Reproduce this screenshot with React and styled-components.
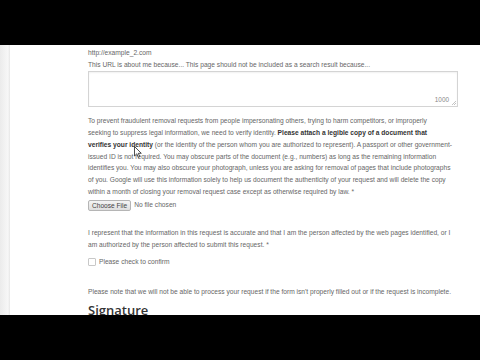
import React from 'react'
import styled, { createGlobalStyle } from 'styled-components'

const Global = createGlobalStyle`
  html, body { margin: 0; padding: 0; background: #000; }
  body { font-family: "Liberation Sans", Arial, sans-serif; }
`

const Frame = styled.div`
  width: 480px;
  height: 360px;
  display: flex;
  flex-direction: column;
  background: #000;
  overflow: hidden;
  position: relative;
`

const Letterbox = styled.div`
  height: ${({ h }) => h}px;
  background: #000;
  flex: none;
`

const Screen = styled.div`
  height: 270px;
  display: flex;
  background: #fff;
  overflow: hidden;
  flex: none;
`

const Strip = styled.div`
  width: 10px;
  flex: none;
  background: linear-gradient(to right, #ebebeb, #f7f7f7 80%, #e6e6e6);
`

const Content = styled.div`
  width: 370px;
  padding: 2px 0 0 78px;
  color: #666;
  font-size: 6.65px;
  line-height: 11.7px;
`

const Line = styled.div`
  white-space: nowrap;
`

const AreaBox = styled.div`
  height: 33px;
  border: 1px solid #d4d4d4;
  box-shadow: inset 0 1px 2px rgba(0,0,0,0.06);
  display: flex;
  align-items: flex-end;
  justify-content: flex-end;
  padding: 0 8px 1px 0;
  position: relative;
  margin-top: 1px;
`

const Counter = styled.span`
  color: #888;
  font-size: 6.4px;
`

const Grip = styled.svg`
  position: absolute;
  right: 1px;
  bottom: 1px;
`

const Para = styled.div`
  margin: ${({ m }) => m};
  color: #666;
`

const Strong = styled.b`
  color: #333;
  font-weight: bold;
`

const FileRow = styled.div`
  display: flex;
  align-items: center;
  gap: 3px;
  margin-top: 2px;
`

const FileButton = styled.span`
  display: inline-block;
  height: 9px;
  line-height: 9px;
  padding: 0 3px;
  border: 1px solid #b5b5b5;
  border-radius: 2px;
  background: linear-gradient(#f4f4f4, #dedede);
  color: #444;
  font-size: 6.6px;
`

const CheckRow = styled.label`
  display: flex;
  align-items: center;
  gap: 3px;
  margin-top: 6px;
`

const Box = styled.span`
  width: 6px;
  height: 6px;
  border: 1px solid #c8c8c8;
  border-radius: 1px;
  background: #fff;
`

const Heading = styled.h2`
  margin: 4px 0 0;
  font-family: "Open Sans", "Liberation Sans", sans-serif;
  font-size: 13px;
  font-weight: 600;
  color: #333;
  line-height: 16px;
`

const Cursor = styled.svg`
  position: absolute;
  left: 134px;
  top: 146px;
`

export default function App() {
  return (
    <Frame>
      <Global />
      <Letterbox h={45} />
      <Screen>
        <Strip />
        <Content>
          <Line>http://example_2.com</Line>
          <Line>This URL is about me because... This page should not be included as a search result because...</Line>
          <AreaBox>
            <Counter>1000</Counter>
            <Grip width="5" height="5" viewBox="0 0 5 5">
              <path d="M5 1 L1 5 M5 3 L3 5" stroke="#aaa" strokeWidth="0.7" />
            </Grip>
          </AreaBox>
          <Para m="8px 0 0">
            <Line>To prevent fraudulent removal requests from people impersonating others, trying to harm competitors, or improperly</Line>
            <Line>seeking to suppress legal information, we need to verify identity. <Strong>Please attach a legible copy of a document that</Strong></Line>
            <Line><Strong>verifies your identity</Strong> (or the identity of the person whom you are authorized to represent). A passport or other government-</Line>
            <Line>issued ID is not required. You may obscure parts of the document (e.g., numbers) as long as the remaining information</Line>
            <Line>identifies you. You may also obscure your photograph, unless you are asking for removal of pages that include photographs</Line>
            <Line>of you. Google will use this information solely to help us document the authenticity of your request and will delete the copy</Line>
            <Line>within a month of closing your removal request case except as otherwise required by law. *</Line>
          </Para>
          <FileRow>
            <FileButton>Choose File</FileButton>
            <span>No file chosen</span>
          </FileRow>
          <Para m="16px 0 0">
            <Line>I represent that the information in this request is accurate and that I am the person affected by the web pages identified, or I</Line>
            <Line>am authorized by the person affected to submit this request. *</Line>
          </Para>
          <CheckRow>
            <Box />
            <span>Please check to confirm</span>
          </CheckRow>
          <Para m="18px 0 0">
            <Line>Please note that we will not be able to process your request if the form isn't properly filled out or if the request is incomplete.</Line>
          </Para>
          <Heading>Signature</Heading>
        </Content>
      </Screen>
      <Letterbox h={45} />
      <Cursor width="8" height="12" viewBox="0 0 8 12">
        <path d="M0.5 0.5 L0.5 10 L2.8 7.8 L4.4 11.3 L5.8 10.7 L4.3 7.3 L7.3 7.3 Z" fill="#fff" stroke="#222" strokeWidth="0.8" strokeLinejoin="round" />
      </Cursor>
    </Frame>
  )
}
